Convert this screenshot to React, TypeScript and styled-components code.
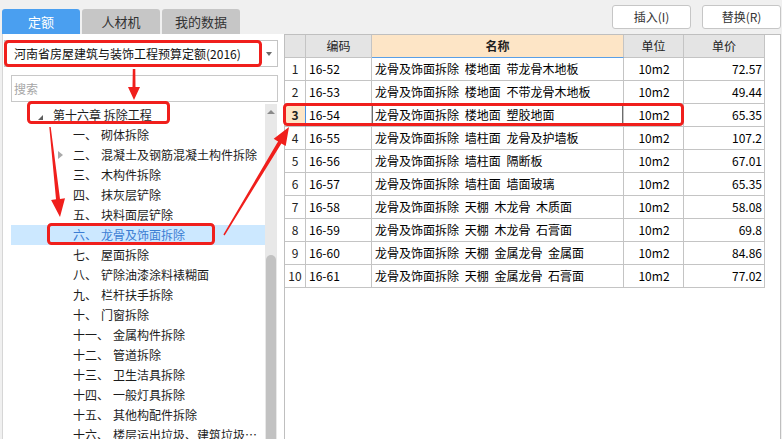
import React from "react";
import styled, { createGlobalStyle } from "styled-components";

const GlobalStyle = createGlobalStyle`
  html, body { margin: 0; padding: 0; background: #f0f0f0; }
  body { font-family: "Microsoft YaHei", "Noto Sans CJK SC", "Noto Sans", sans-serif; }
  * { box-sizing: border-box; }
`;

const FONT = `"Microsoft YaHei", "Noto Sans CJK SC", "Noto Sans", sans-serif`;

const Page = styled.div`
  position: relative;
  width: 782px;
  height: 439px;
  overflow: hidden;
  background: #f0f0f0;
  display: flex;
  flex-direction: column;
  font-family: ${FONT};
  font-size: 12px;
  color: #1e1e1e;
`;

const TopBar = styled.div`
  height: 34px;
  flex-shrink: 0;
  display: flex;
  justify-content: space-between;
`;

const Tabs = styled.div`
  display: flex;
  gap: 2px;
  padding: 9px 0 0 2px;
`;

const Tab = styled.div<{ $active?: boolean }>`
  width: 78px;
  height: 25px;
  border-radius: 3px 3px 0 0;
  background: ${(p) => (p.$active ? "#4a9ff0" : "#c6c6c6")};
  color: ${(p) => (p.$active ? "#ffffff" : "#333333")};
  display: flex;
  align-items: center;
  justify-content: center;
  font-size: 13px;
  line-height: 16px;
`;

const Actions = styled.div`
  display: flex;
  gap: 11px;
  padding: 5px 1px 0 0;
`;

const Button = styled.button`
  width: 79px;
  height: 24px;
  padding: 0;
  background: #ffffff;
  border: 1px solid #c6c6c6;
  border-radius: 3px;
  font-family: ${FONT};
  font-size: 12px;
  color: #333333;
  line-height: 16px;
`;

const Main = styled.div`
  flex: 1;
  min-height: 0;
  display: flex;
`;

const LeftPanel = styled.div`
  width: 282px;
  margin-left: 2px;
  background: #ffffff;
  border-left: 1px solid #d6d6d6;
  display: flex;
  flex-direction: column;
  min-height: 0;
`;

const Select = styled.div`
  margin: 6px 0 0 1px;
  width: 274px;
  height: 27px;
  flex-shrink: 0;
  border: 1px solid #c4c4c4;
  display: flex;
  align-items: center;
  justify-content: space-between;
  padding: 0 5px 0 9px;
  font-size: 12px;
  color: #111111;
  line-height: 16px;
`;

const Caret = styled.span`
  width: 0;
  height: 0;
  border-left: 3px solid transparent;
  border-right: 3px solid transparent;
  border-top: 4px solid #6a6a6a;
`;

const Search = styled.input`
  margin: 8px 0 0 8px;
  width: 267px;
  height: 27px;
  flex-shrink: 0;
  border: 1px solid #c8c8c8;
  padding: 0 0 0 2px;
  font-family: ${FONT};
  font-size: 12px;
  color: #222;
  outline: none;
  &::placeholder {
    color: #a6a6a6;
  }
`;

const TreeArea = styled.div`
  margin: 2px 0 0 8px;
  width: 266px;
  flex: 1;
  min-height: 0;
  display: flex;
  overflow: hidden;
`;

const TreeList = styled.div`
  width: 254px;
  padding-top: 1px;
  overflow: hidden;
`;

const TreeRow = styled.div<{ $selected?: boolean; $indent: number }>`
  height: 20px;
  display: flex;
  align-items: center;
  padding-left: ${(p) => p.$indent}px;
  padding-right: 7px;
  background: ${(p) => (p.$selected ? "#cce8ff" : "transparent")};
  color: ${(p) => (p.$selected ? "#3b7dd3" : "#1c1c1c")};
  white-space: nowrap;
  line-height: 18px;
`;

const ExpandedMark = styled.span`
  width: 0;
  height: 0;
  margin-right: 10px;
  border-left: 5px solid transparent;
  border-bottom: 5px solid #5e5e5e;
  position: relative;
  top: 2px;
`;

const ExpanderSlot = styled.span`
  width: 15px;
  flex-shrink: 0;
  display: flex;
  align-items: center;
`;

const CollapsedMark = styled.span`
  width: 0;
  height: 0;
  border-top: 4px solid transparent;
  border-bottom: 4px solid transparent;
  border-left: 5px solid #a9a9a9;
`;

const NodeNum = styled.span`
  margin-right: 4px;
  flex-shrink: 0;
`;

const NodeName = styled.span`
  overflow: hidden;
  text-overflow: ellipsis;
  min-width: 0;
  line-height: 18px;
`;

const Scrollbar = styled.div`
  width: 12px;
  background: #e8e8e8;
  display: flex;
  flex-direction: column;
  align-items: center;
`;

const ScrollUp = styled.div`
  height: 16px;
  flex-shrink: 0;
  display: flex;
  align-items: center;
  justify-content: center;
  &::before {
    content: "";
    width: 0;
    height: 0;
    border-left: 4px solid transparent;
    border-right: 4px solid transparent;
    border-bottom: 4px solid #8a8a8a;
  }
`;

const Thumb = styled.div<{ $top: number }>`
  margin-top: ${(p) => p.$top}px;
  width: 10px;
  flex: 1;
  background: #c2c2c2;
  border-radius: 5px 5px 0 0;
`;

const RightPanel = styled.div`
  flex: 1;
  margin-right: 1px;
  background: #ffffff;
  border: 1px solid #bfbfbf;
  border-bottom: none;
`;

const COLS = "21px 66px 252px 60px 81px";

const GridRow = styled.div`
  display: grid;
  grid-template-columns: ${COLS};
  width: 480px;
  height: 23px;
`;

type Align = "left" | "center" | "right";

const HeadCell = styled.div<{ $active?: boolean }>`
  display: flex;
  align-items: center;
  justify-content: center;
  background: ${(p) => (p.$active ? "#fde5c6" : "#e4e4e4")};
  border-right: 1px solid #c4c4c4;
  border-bottom: 1px solid ${(p) => (p.$active ? "#5a9fe6" : "#c4c4c4")};
  font-size: 12px;
  font-weight: ${(p) => (p.$active ? 700 : 400)};
  color: #1e1e1e;
  line-height: 16px;
`;

const Cell = styled.div<{ $align?: Align; $focus?: boolean }>`
  display: flex;
  align-items: center;
  justify-content: ${(p) =>
    p.$align === "right" ? "flex-end" : p.$align === "center" ? "center" : "flex-start"};
  padding: 0 2px 0 3px;
  border-right: 1px solid #c4c4c4;
  border-bottom: 1px solid #c4c4c4;
  font-size: 12px;
  color: #000000;
  white-space: nowrap;
  word-spacing: 3px;
  line-height: 16px;
  box-shadow: ${(p) => (p.$focus ? "inset 0 0 0 1px #6c6c6c" : "none")};
`;

const IndexCell = styled.div<{ $current?: boolean }>`
  display: flex;
  align-items: center;
  justify-content: center;
  background: ${(p) => (p.$current ? "#fde5c6" : "#ffffff")};
  border-right: 1px solid ${(p) => (p.$current ? "#4a90e2" : "#c4c4c4")};
  border-bottom: 1px solid #c4c4c4;
  font-size: 12px;
  font-weight: ${(p) => (p.$current ? 700 : 400)};
  color: #222;
  line-height: 16px;
`;

const Overlay = styled.svg`
  position: absolute;
  left: 0;
  top: 0;
  pointer-events: none;
`;

const RED = "#f01f1c";

const rows = [
  ["16-52", "龙骨及饰面拆除 楼地面 带龙骨木地板", "10m2", "72.57"],
  ["16-53", "龙骨及饰面拆除 楼地面 不带龙骨木地板", "10m2", "49.44"],
  ["16-54", "龙骨及饰面拆除 楼地面 塑胶地面", "10m2", "65.35"],
  ["16-55", "龙骨及饰面拆除 墙柱面 龙骨及护墙板", "10m2", "107.2"],
  ["16-56", "龙骨及饰面拆除 墙柱面 隔断板", "10m2", "67.01"],
  ["16-57", "龙骨及饰面拆除 墙柱面 墙面玻璃", "10m2", "65.35"],
  ["16-58", "龙骨及饰面拆除 天棚 木龙骨 木质面", "10m2", "58.08"],
  ["16-59", "龙骨及饰面拆除 天棚 木龙骨 石膏面", "10m2", "69.8"],
  ["16-60", "龙骨及饰面拆除 天棚 金属龙骨 金属面", "10m2", "84.86"],
  ["16-61", "龙骨及饰面拆除 天棚 金属龙骨 石膏面", "10m2", "77.02"],
];

const nodes: { num: string; name: string; expandable?: boolean; selected?: boolean }[] = [
  { num: "一、", name: "砌体拆除" },
  { num: "二、", name: "混凝土及钢筋混凝土构件拆除", expandable: true },
  { num: "三、", name: "木构件拆除" },
  { num: "四、", name: "抹灰层铲除" },
  { num: "五、", name: "块料面层铲除" },
  { num: "六、", name: "龙骨及饰面拆除", selected: true },
  { num: "七、", name: "屋面拆除" },
  { num: "八、", name: "铲除油漆涂料裱糊面" },
  { num: "九、", name: "栏杆扶手拆除" },
  { num: "十、", name: "门窗拆除" },
  { num: "十一、", name: "金属构件拆除" },
  { num: "十二、", name: "管道拆除" },
  { num: "十三、", name: "卫生洁具拆除" },
  { num: "十四、", name: "一般灯具拆除" },
  { num: "十五、", name: "其他构配件拆除" },
  { num: "十六、", name: "楼层运出垃圾、建筑垃圾外运及其他" },
];

function arrowPoints(
  x1: number,
  y1: number,
  x2: number,
  y2: number,
  tailW: number,
  shaftW: number,
  headLen: number,
  headHalf: number
) {
  const dx = x2 - x1;
  const dy = y2 - y1;
  const len = Math.hypot(dx, dy);
  const ux = dx / len;
  const uy = dy / len;
  const px = -uy;
  const py = ux;
  const bx = x2 - ux * headLen;
  const by = y2 - uy * headLen;
  const pts = [
    [x1 + (px * tailW) / 2, y1 + (py * tailW) / 2],
    [bx + (px * shaftW) / 2, by + (py * shaftW) / 2],
    [bx + px * headHalf, by + py * headHalf],
    [x2, y2],
    [bx - px * headHalf, by - py * headHalf],
    [bx - (px * shaftW) / 2, by - (py * shaftW) / 2],
    [x1 - (px * tailW) / 2, y1 - (py * tailW) / 2],
  ];
  return pts.map((p) => `${p[0].toFixed(1)},${p[1].toFixed(1)}`).join(" ");
}

export default function App() {
  return (
    <>
      <GlobalStyle />
      <Page>
        <TopBar>
          <Tabs>
            <Tab $active>定额</Tab>
            <Tab>人材机</Tab>
            <Tab>我的数据</Tab>
          </Tabs>
          <Actions>
            <Button>插入(I)</Button>
            <Button>替换(R)</Button>
          </Actions>
        </TopBar>
        <Main>
          <LeftPanel>
            <Select>
              <span>河南省房屋建筑与装饰工程预算定额(2016)</span>
              <Caret />
            </Select>
            <Search placeholder="搜索" />
            <TreeArea>
              <TreeList>
                <TreeRow $indent={27}>
                  <ExpandedMark />
                  <span>第十六章 拆除工程</span>
                </TreeRow>
                {nodes.map((n) => (
                  <TreeRow key={n.num} $indent={47} $selected={n.selected}>
                    <ExpanderSlot>{n.expandable && <CollapsedMark />}</ExpanderSlot>
                    <NodeNum>{n.num}</NodeNum>
                    <NodeName>{n.name}</NodeName>
                  </TreeRow>
                ))}
              </TreeList>
              <Scrollbar>
                <ScrollUp />
                <Thumb $top={135} />
              </Scrollbar>
            </TreeArea>
          </LeftPanel>
          <RightPanel>
            <GridRow>
              <HeadCell />
              <HeadCell>编码</HeadCell>
              <HeadCell $active>名称</HeadCell>
              <HeadCell>单位</HeadCell>
              <HeadCell>单价</HeadCell>
            </GridRow>
            {rows.map((r, i) => (
              <GridRow key={r[0]}>
                <IndexCell $current={i === 2}>{i + 1}</IndexCell>
                <Cell>{r[0]}</Cell>
                <Cell $focus={i === 2}>{r[1]}</Cell>
                <Cell $align="center">{r[2]}</Cell>
                <Cell $align="right">{r[3]}</Cell>
              </GridRow>
            ))}
          </RightPanel>
        </Main>
        <Overlay width={782} height={439} viewBox="0 0 782 439">
          <g fill="none" stroke={RED} strokeWidth={3}>
            <rect x={5.5} y={41.5} width={255} height={24} rx={3} />
            <rect x={28.5} y={102.5} width={140} height={20} rx={3} />
            <rect x={48.5} y={224.5} width={165} height={19} rx={3} />
            <rect x={284.5} y={104.5} width={398} height={20} rx={3} />
          </g>
          <g fill={RED}>
            <polygon points={arrowPoints(134, 69, 134, 100, 2.5, 3, 13, 6)} />
            <polygon points={arrowPoints(50, 127, 60, 217, 1.5, 4, 18, 7)} />
            <polygon points={arrowPoints(224, 235, 289, 127, 1.5, 4, 18, 7)} />
          </g>
        </Overlay>
      </Page>
    </>
  );
}
